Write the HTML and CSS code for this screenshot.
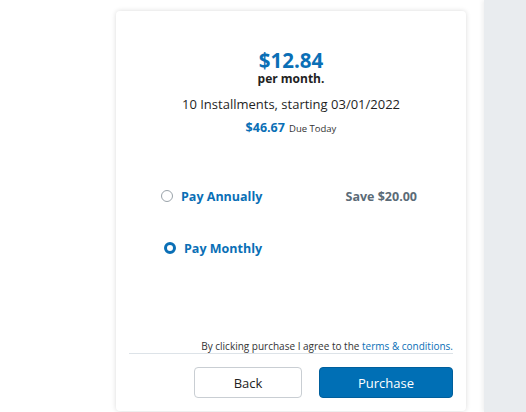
FILE: index.html
```html
<!DOCTYPE html>
<html>
<head>
<meta charset="utf-8">
<link rel="stylesheet" href="styles.css">
</head>
<body>
<div class="page">
  <main class="main">
    <section class="card">
      <div class="summary">
        <div class="price">$12.84</div>
        <div class="per">per month.</div>
        <div class="installments">10 Installments, starting 03/01/2022</div>
        <div class="due"><span class="due-amount">$46.67</span> <span class="due-label">Due Today</span></div>
      </div>
      <div class="options">
        <label class="option option-annual">
          <span class="radio"></span>
          <span class="option-label">Pay Annually</span>
          <span class="save">Save $20.00</span>
        </label>
        <label class="option option-monthly">
          <span class="radio radio-checked"></span>
          <span class="option-label">Pay Monthly</span>
        </label>
      </div>
      <div class="terms">By clicking purchase I agree to the <a class="terms-link">terms &amp; conditions.</a></div>
      <div class="actions">
        <button class="btn btn-back">Back</button>
        <button class="btn btn-primary">Purchase</button>
      </div>
    </section>
  </main>
  <aside class="side"></aside>
</div>
</body>
</html>
```
FILE: styles.css
```css
* { box-sizing: border-box; }
html, body { margin: 0; padding: 0; height: 100%; }
body {
  font-family: "Open Sans", "Noto Sans", sans-serif;
  color: #222;
  background: #fff;
  overflow: hidden;
}
.page { display: flex; height: 412px; }
.main { width: 484px; flex: none; padding: 11px 0 0 116px; }
.side {
  flex: 1;
  background: #e9ecef;
  box-shadow: -2px 0 4px rgba(0,0,0,0.06);
}
.card {
  width: 350px;
  height: 400px;
  background: #fff;
  border-radius: 4px;
  box-shadow: 0 0 5px rgba(0,0,0,0.15);
  padding: 0 13px;
  display: flex;
  flex-direction: column;
}
.summary { text-align: center; padding-top: 39px; }
.price {
  color: #0a6fb6;
  font-size: 20.5px;
  font-weight: 700;
  line-height: 21px;
}
.per { font-size: 12px; font-weight: 700; line-height: 14px; color: #222; margin-top: 1px; }
.installments { font-size: 13px; line-height: 16px; margin-top: 10px; color: #1f1f1f; }
.due { margin-top: 6px; line-height: 16px; }
.due-amount { color: #0a6fb6; font-weight: 700; font-size: 12.5px; }
.due-label { color: #333; font-size: 9.5px; }
.options { padding: 0 36px 0 32px; margin-top: 49px; }
.option { display: flex; align-items: center; height: 20px; }
.option-monthly { margin-top: 32px; padding-left: 3px; }
.radio {
  width: 12px; height: 12px;
  border-radius: 50%;
  border: 1px solid #9aa3aa;
  margin-right: 8px;
  flex: none;
}
.radio-checked { border: 3.5px solid #0a6fb6; }
.option-label { color: #0a6fb6; font-weight: 700; font-size: 12.5px; flex: 1; }
.save { color: #5b6b77; font-weight: 700; font-size: 12.5px; }
.terms {
  margin-top: auto;
  text-align: right;
  font-size: 10px;
  color: #333;
  line-height: 12px;
  padding-bottom: 1px;
  border-bottom: 1px solid #dde3e8;
}
.terms-link { color: #0a6fb6; }
.actions {
  display: flex;
  justify-content: flex-end;
  gap: 17px;
  padding: 13px 0 13px;
}
.btn {
  height: 31px;
  border-radius: 4px;
  font-family: inherit;
  font-size: 13px;
}
.btn-back { width: 108px; background: #fff; border: 1px solid #c9ced3; color: #222; }
.btn-primary { width: 134px; background: #006fb5; border: 1px solid #005f9c; color: #fff; }
```
